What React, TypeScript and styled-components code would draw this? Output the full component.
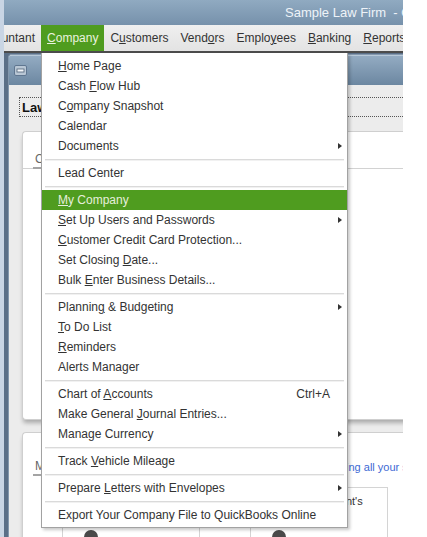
import React from "react";
import styled, { createGlobalStyle } from "styled-components";

const GlobalStyle = createGlobalStyle`
  html, body {
    margin: 0;
    padding: 0;
    background: #ffffff;
  }
  body {
    font-family: "Liberation Sans", Arial, sans-serif;
    font-size: 12px;
    color: #333;
  }
  u {
    text-decoration-thickness: 1px;
    text-underline-offset: 1px;
  }
`;

type MenuEntry =
  | { kind: "sep" }
  | {
      kind: "item";
      label: string;
      key?: number;
      shortcut?: string;
      submenu?: boolean;
      active?: boolean;
    };

const companyMenu: MenuEntry[] = [
  { kind: "item", label: "Home Page", key: 0 },
  { kind: "item", label: "Cash Flow Hub", key: 5 },
  { kind: "item", label: "Company Snapshot", key: 1 },
  { kind: "item", label: "Calendar" },
  { kind: "item", label: "Documents", submenu: true },
  { kind: "sep" },
  { kind: "item", label: "Lead Center" },
  { kind: "sep" },
  { kind: "item", label: "My Company", key: 0, active: true },
  { kind: "item", label: "Set Up Users and Passwords", key: 0, submenu: true },
  { kind: "item", label: "Customer Credit Card Protection...", key: 0 },
  { kind: "item", label: "Set Closing Date...", key: 12 },
  { kind: "item", label: "Bulk Enter Business Details...", key: 5 },
  { kind: "sep" },
  { kind: "item", label: "Planning & Budgeting", key: 7, submenu: true },
  { kind: "item", label: "To Do List", key: 0 },
  { kind: "item", label: "Reminders", key: 0 },
  { kind: "item", label: "Alerts Manager" },
  { kind: "sep" },
  { kind: "item", label: "Chart of Accounts", key: 9, shortcut: "Ctrl+A" },
  { kind: "item", label: "Make General Journal Entries...", key: 13 },
  { kind: "item", label: "Manage Currency", submenu: true },
  { kind: "sep" },
  { kind: "item", label: "Track Vehicle Mileage", key: 6 },
  { kind: "sep" },
  { kind: "item", label: "Prepare Letters with Envelopes", key: 8, submenu: true },
  { kind: "sep" },
  { kind: "item", label: "Export Your Company File to QuickBooks Online" },
];

const menuBarItems = [
  { label: "Accountant", key: -1 },
  { label: "Company", key: 0, open: true },
  { label: "Customers", key: 1 },
  { label: "Vendors", key: 4 },
  { label: "Employees", key: 5 },
  { label: "Banking", key: 0 },
  { label: "Reports", key: 0 },
];

const Page = styled.div`
  display: flex;
  height: 537px;
  overflow: hidden;
`;

const LeftStrip = styled.div`
  flex: none;
  width: 4px;
  background: #c9d5e4;
`;

const AppWindow = styled.div`
  position: relative;
  flex: none;
  width: 399px;
  display: flex;
  flex-direction: column;
  overflow: hidden;
`;

const TitleBar = styled.div`
  flex: none;
  height: 25px;
  display: flex;
  align-items: center;
  padding-left: 281px;
  background: linear-gradient(#90aac1, #7691ab);
  color: #eef3f8;
  font-size: 13px;
  white-space: nowrap;
`;

const MenuBar = styled.div`
  flex: none;
  height: 26px;
  display: flex;
  align-items: stretch;
  background: linear-gradient(#efefef, #e3e3e3);
  border-bottom: 2px solid #4c4c4c;
  white-space: nowrap;
`;

const MenuBarItem = styled.div<{ $open?: boolean; $first?: boolean }>`
  display: flex;
  align-items: center;
  padding: 0 6px;
  margin-left: ${(p) => (p.$first ? "-35px" : "0")};
  font-size: 12px;
  color: ${(p) => (p.$open ? "#eaf3df" : "#333")};
  background: ${(p) => (p.$open ? "#4f9c1f" : "transparent")};
`;

const Workspace = styled.div`
  flex: 1;
  display: flex;
  padding: 1px 0 0 4px;
  background: #5b6f87;
  overflow: hidden;
`;

const MdiWindow = styled.div`
  flex: none;
  width: 460px;
  display: flex;
  flex-direction: column;
  border: 1px solid #8397ad;
  border-right: none;
  border-bottom: none;
  border-radius: 4px 0 0 0;
  background: #ececec;
  overflow: hidden;
`;

const MdiTitle = styled.div`
  flex: none;
  height: 29px;
  display: flex;
  align-items: center;
  padding-left: 5px;
  border-top: 1px solid #b7c8d8;
  background: linear-gradient(#93abc2, #6c87a1);
`;

const MdiBody = styled.div`
  flex: 1;
  display: flex;
  flex-direction: column;
  padding: 12px 0 0 10px;
`;

const DocTab = styled.div`
  flex: none;
  height: 18px;
  display: flex;
  align-items: center;
  padding-left: 2px;
  border: 1px dotted #555;
  border-right: none;
  font-size: 13px;
  font-weight: bold;
  color: #111;
  white-space: nowrap;
`;

const Card = styled.div<{ $height?: number; $top: number; $round: string }>`
  flex: none;
  height: ${(p) => (p.$height ? `${p.$height}px` : "auto")};
  flex-grow: ${(p) => (p.$height ? 0 : 1)};
  margin: ${(p) => p.$top}px 0 0 3px;
  display: flex;
  flex-direction: column;
  background: #fff;
  border: 1px solid #cfcfcf;
  border-right: none;
  border-radius: ${(p) => p.$round};
  box-shadow: 0 4px 4px -1px rgba(0, 0, 0, 0.28);
`;

const CardHeader = styled.div<{ $height: number; $rule?: boolean }>`
  flex: none;
  height: ${(p) => p.$height}px;
  display: flex;
  align-items: flex-end;
  padding-left: 10px;
  border-bottom: 1px solid ${(p) => (p.$rule ? "#d2d2d2" : "transparent")};
  white-space: nowrap;
`;

const SectionTab = styled.div`
  padding: 0 2px 1px;
  margin-bottom: -1px;
  line-height: 14px;
  font-size: 12px;
  color: #666;
  border-bottom: 2px solid #a4a4a4;
`;

const SectionLink = styled.div`
  margin-left: auto;
  padding-right: 41px;
  margin-bottom: 1px;
  line-height: 14px;
  font-size: 11px;
  color: #4069d4;
`;

const TileRow = styled.div`
  display: flex;
  gap: 50px;
  margin: 11px 0 0 39px;
`;

const Tile = styled.div`
  flex: none;
  width: 138px;
  height: 90px;
  display: flex;
  flex-direction: column;
  align-items: center;
  border: 1px solid #d4d4d4;
  border-bottom: none;
  box-sizing: border-box;
`;

const TileTitle = styled.div`
  margin-top: 6px;
  font-size: 11px;
  line-height: 14px;
  color: #333;
  text-align: center;
`;

const TileIcon = styled.div`
  align-self: flex-start;
  margin: 8px 0 0 21px;
  width: 14px;
  height: 14px;
  border-radius: 50%;
  background: #4a4a4a;
`;

const DropMenu = styled.div`
  position: absolute;
  left: 37px;
  top: 53px;
  width: 307px;
  box-sizing: border-box;
  padding: 3px 0 2px;
  background: #fff;
  border: 1px solid #a2a2a2;
  border-top: none;
  box-shadow: 2px 2px 3px rgba(0, 0, 0, 0.22);
`;

const MenuRow = styled.div<{ $active?: boolean }>`
  height: 20px;
  display: flex;
  align-items: center;
  padding: 0 4px 0 16px;
  font-size: 12px;
  white-space: nowrap;
  color: ${(p) => (p.$active ? "#e6efdc" : "#333")};
  background: ${(p) => (p.$active ? "#4f9c1f" : "transparent")};
`;

const RowLabel = styled.span`
  flex: 1;
`;

const Shortcut = styled.span`
  margin-right: 13px;
`;

const SubArrow = styled.span`
  width: 0;
  height: 0;
  margin-right: 1px;
  border-left: 4px solid #333;
  border-top: 3.5px solid transparent;
  border-bottom: 3.5px solid transparent;
`;

const Separator = styled.div`
  height: 2px;
  margin: 3px 3px 2px;
  background: linear-gradient(#dadada 50%, #f1f1f1 50%);
`;

const Mnemonic: React.FC<{ text: string; at?: number }> = ({ text, at }) => {
  if (at === undefined || at < 0) return <>{text}</>;
  return (
    <>
      {text.slice(0, at)}
      <u>{text[at]}</u>
      {text.slice(at + 1)}
    </>
  );
};

const WindowMenuIcon = () => (
  <svg width="13" height="11" viewBox="0 0 13 11">
    <rect x="0.5" y="0.5" width="12" height="10" rx="1.5" fill="#b9c7d5" stroke="#5f7690" />
    <rect x="3" y="4" width="7" height="3" fill="#f4f7fa" stroke="#4f6378" strokeWidth="0.8" />
  </svg>
);

export default function App() {
  return (
    <Page>
      <GlobalStyle />
      <LeftStrip />
      <AppWindow>
        <TitleBar>Sample Law Firm&nbsp;&nbsp;- QuickBooks Accountant Desktop 2019</TitleBar>
        <MenuBar>
          {menuBarItems.map((m, i) => (
            <MenuBarItem key={m.label} $open={m.open} $first={i === 0}>
              <Mnemonic text={m.label} at={m.key} />
            </MenuBarItem>
          ))}
        </MenuBar>
        <Workspace>
          <MdiWindow>
            <MdiTitle>
              <WindowMenuIcon />
            </MdiTitle>
            <MdiBody>
              <DocTab>Law Firm Company Snapshot</DocTab>
              <Card $height={287} $top={14} $round="4px 0 0 4px">
                <CardHeader $height={36} $rule>
                  <SectionTab>Company Information</SectionTab>
                </CardHeader>
              </Card>
              <Card $top={12} $round="4px 0 0 0">
                <CardHeader $height={42}>
                  <SectionTab>My Services</SectionTab>
                  <SectionLink>Start tracking all your sales</SectionLink>
                </CardHeader>
                <TileRow>
                  <Tile>
                    <TileTitle>
                      Online
                      <br />
                      Banking
                    </TileTitle>
                    <TileIcon />
                  </Tile>
                  <Tile>
                    <TileTitle>
                      Your Accountant's
                      <br />
                      Copy
                    </TileTitle>
                    <TileIcon />
                  </Tile>
                </TileRow>
              </Card>
            </MdiBody>
          </MdiWindow>
        </Workspace>

        <DropMenu>
          {companyMenu.map((e, i) =>
            e.kind === "sep" ? (
              <Separator key={i} />
            ) : (
              <MenuRow key={i} $active={e.active}>
                <RowLabel>
                  <Mnemonic text={e.label} at={e.key} />
                </RowLabel>
                {e.shortcut && <Shortcut>{e.shortcut}</Shortcut>}
                {e.submenu && <SubArrow />}
              </MenuRow>
            )
          )}
        </DropMenu>
      </AppWindow>
    </Page>
  );
}
